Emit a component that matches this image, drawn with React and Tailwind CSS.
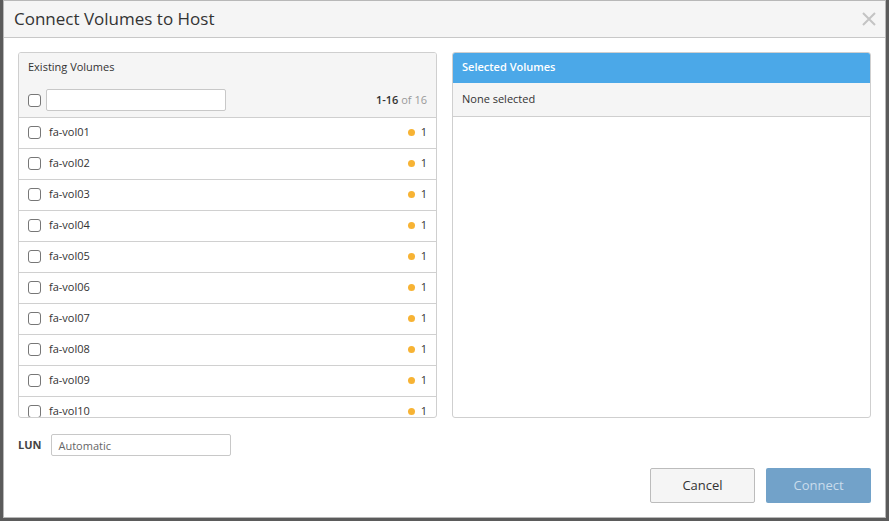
import React from 'react';

const volumes = [
  'fa-vol01', 'fa-vol02', 'fa-vol03', 'fa-vol04', 'fa-vol05',
  'fa-vol06', 'fa-vol07', 'fa-vol08', 'fa-vol09', 'fa-vol10',
];

const Box = () => (
  <span className="block w-[13px] h-[13px] shrink-0 rounded-[3px] border border-[#777] bg-white" />
);

const VolumeRow = ({ name }) => (
  <div className="flex items-center h-[31px] shrink-0 border-b border-[#d0d0d0] pl-[9px] pr-[9px] pb-[1px]">
    <Box />
    <span className="ml-[8px] text-[11px] text-[#333]">{name}</span>
    <span className="ml-auto w-[7px] h-[7px] rounded-full bg-[#f7b334]" />
    <span className="ml-[6px] text-[11px] text-[#333]">1</span>
  </div>
);

export default function App() {
  return (
    <div
      className="w-[889px] h-[521px] bg-[#5b5b5b] pl-[3px] overflow-hidden"
      style={{ fontFamily: '"Open Sans", Lato, sans-serif' }}
    >
      <div className="w-[883px] h-[518px] bg-white border border-[#b8b8b8] flex flex-col">
        {/* Header */}
        <div className="h-[37px] shrink-0 bg-[#f5f5f5] border-b border-[#c8c8c8] flex items-center pl-[10px] pr-[9px] pb-[1px]">
          <h1 className="text-[17px] text-[#333] leading-none">Connect Volumes to Host</h1>
          <svg className="ml-auto" width="14" height="14" viewBox="0 0 14 14">
            <path d="M1 1 L13 13 M13 1 L1 13" stroke="#c4c4c4" strokeWidth="2" />
          </svg>
        </div>

        {/* Panels */}
        <div className="flex gap-[15px] px-[14px] pt-[14px]">
          {/* Existing */}
          <div className="w-[419px] h-[366px] border border-[#cfcfcf] rounded-[3px] flex flex-col overflow-hidden">
            <div className="h-[65px] shrink-0 bg-[#f5f5f5] border-b border-[#cfcfcf] flex flex-col px-[9px]">
              <div className="h-[28px] flex items-center text-[11px] text-[#333]">Existing Volumes</div>
              <div className="flex items-center mt-[8px]">
                <Box />
                <input
                  className="ml-[5px] w-[180px] h-[22px] bg-white border border-[#c8c8c8] rounded-[2px] outline-none"
                  readOnly
                />
                <span className="ml-auto text-[11px] text-[#999]">
                  <b className="text-[#333] font-semibold">1-16</b> of 16
                </span>
              </div>
            </div>
            <div className="flex-1 flex flex-col overflow-hidden">
              {volumes.map((v) => (
                <VolumeRow key={v} name={v} />
              ))}
            </div>
          </div>

          {/* Selected */}
          <div className="w-[419px] h-[366px] border border-[#cfcfcf] rounded-[3px] flex flex-col overflow-hidden">
            <div className="h-[31px] shrink-0 bg-[#4ba8e8] -mx-px -mt-px px-[10px] flex items-center text-[11px] font-semibold text-white rounded-t-[3px]">
              Selected Volumes
            </div>
            <div className="h-[34px] shrink-0 bg-[#f5f5f5] border-b border-[#cfcfcf] px-[9px] flex items-center text-[11px] text-[#333]">
              None selected
            </div>
          </div>
        </div>

        {/* LUN */}
        <div className="flex items-center px-[14px] mt-[16px]">
          <span className="text-[11px] font-bold text-[#444]">LUN</span>
          <input
            className="ml-[10px] w-[180px] h-[22px] border border-[#c8c8c8] rounded-[2px] px-[6px] text-[11px] text-[#555] placeholder:text-[#666] outline-none"
            placeholder="Automatic"
            readOnly
          />
        </div>

        {/* Footer */}
        <div className="flex justify-end gap-[11px] px-[14px] mt-[12px]">
          <button className="w-[105px] h-[35px] bg-[#f5f5f5] border border-[#bcbcbc] rounded-[2px] text-[13px] text-[#333]">
            Cancel
          </button>
          <button className="w-[105px] h-[35px] bg-[#72a2c9] rounded-[2px] text-[13px] text-[#c9dcec]">
            Connect
          </button>
        </div>
      </div>
    </div>
  );
}
